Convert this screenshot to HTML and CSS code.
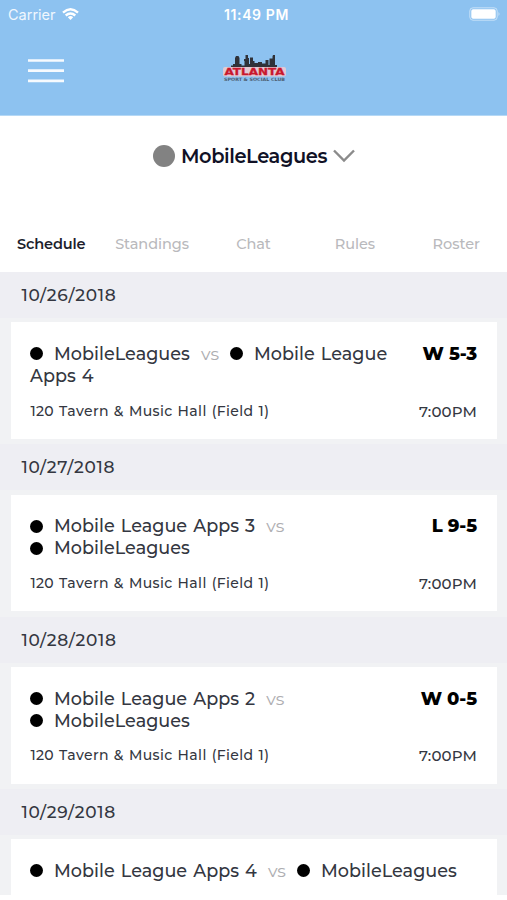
FILE: index.html
```html
<!DOCTYPE html>
<html lang="en">
<head>
<meta charset="utf-8">
<title>MobileLeagues</title>
<link rel="stylesheet" href="styles.css">
</head>
<body>
<div class="screen">
  <header class="top">
    <div class="status">
      <div class="carrier"><span>Carrier</span>
        <svg width="17" height="13" viewBox="0 0 17 13" fill="none" stroke="#fff" stroke-width="2.4"><path d="M1 4.6Q8.5-2 16 4.6M3.7 7.5Q8.5 3.4 13.3 7.5"/><path d="M5.8 9.2Q8.5 7 11.2 9.2L8.5 12z" fill="#fff" stroke="none"/></svg>
      </div>
      <span class="clock">11:49 PM</span>
      <svg class="battery" width="32" height="14" viewBox="0 0 32 14"><rect x=".8" y=".8" width="27.4" height="12.4" rx="3.2" fill="none" stroke="#fff" stroke-opacity=".5"/><rect x="2.3" y="2.3" width="24.4" height="9.4" rx="1.8" fill="#fff"/><path d="M29.5 5q2 2 0 4z" fill="#fff" fill-opacity=".55"/></svg>
    </div>
    <div class="nav">
      <svg class="menu" width="36" height="26" viewBox="0 0 36 26" stroke="#fff" stroke-opacity=".92" stroke-width="2.7"><path d="M0 2.5h36M0 12.7h36M0 22.8h36"/></svg>
      <svg class="logo" width="66" height="30" viewBox="0 0 66 30">
        <path d="M9 15V12.500h2V11h2V5l1-2h2.500L17.500 5v6h2V12.500h3V8H22V6h1.500V2h2.500v3H27v6h1V4.500h3V8h1.500v2h3.500V9h4v1.500h3.500V7h3v5h1V5.500h3V3.500L51 2h2v10H55v3z" fill="#303239"/>
        <rect x="1" y="14" width="63" height="9.500" rx="2" fill="#e2c9d4"/>
        <text class="logo-name" x="2.500" y="22.300" textLength="60" lengthAdjust="spacingAndGlyphs">ATLANTA</text>
        <text class="logo-sub" x="2" y="28" textLength="61" lengthAdjust="spacingAndGlyphs">SPORT &amp; SOCIAL CLUB</text>
      </svg>
    </div>
  </header>
  <div class="team-picker">
    <i class="avatar"></i><span class="team-name">MobileLeagues</span>
    <svg width="22" height="14" viewBox="0 0 22 14" fill="none" stroke="#8b8b8b" stroke-width="2.4"><path d="M1 1.5L11 11.5L21 1.5"/></svg>
  </div>
  <nav class="tabs"><span class="active">Schedule</span><span>Standings</span><span>Chat</span><span>Rules</span><span>Roster</span></nav>
  <main class="list">
    <section class="day">
      <h2>10/26/2018</h2>
      <article class="card">
        <div class="row"><p class="match"><i class="dot"></i><span>MobileLeagues</span><span class="vs">vs</span><i class="dot"></i><span>Mobile League Apps 4</span></p><b class="score">W 5-3</b></div>
        <div class="row meta"><span class="place">120 Tavern &amp; Music Hall (Field 1)</span><span class="time">7:00PM</span></div>
      </article>
    </section>
    <section class="day">
      <h2>10/27/2018</h2>
      <article class="card">
        <div class="row"><p class="match"><i class="dot"></i><span>Mobile League Apps 3</span><span class="vs">vs</span><br><i class="dot"></i><span>MobileLeagues</span></p><b class="score">L 9-5</b></div>
        <div class="row meta"><span class="place">120 Tavern &amp; Music Hall (Field 1)</span><span class="time">7:00PM</span></div>
      </article>
    </section>
    <section class="day">
      <h2>10/28/2018</h2>
      <article class="card">
        <div class="row"><p class="match"><i class="dot"></i><span>Mobile League Apps 2</span><span class="vs">vs</span><br><i class="dot"></i><span>MobileLeagues</span></p><b class="score">W 0-5</b></div>
        <div class="row meta"><span class="place">120 Tavern &amp; Music Hall (Field 1)</span><span class="time">7:00PM</span></div>
      </article>
    </section>
    <section class="day">
      <h2>10/29/2018</h2>
      <article class="card">
        <div class="row"><p class="match wide"><i class="dot"></i><span>Mobile League Apps 4</span><span class="vs">vs</span><i class="dot"></i><span>MobileLeagues</span></p></div>
      </article>
    </section>
  </main>
</div>
</body>
</html>
```
FILE: styles.css
```css
* { box-sizing: border-box; }
body { margin: 0; background: #fff; font-family: Montserrat, Inter, sans-serif; color: #343741; }
.screen { width: 507px; height: 900px; overflow: hidden; display: flex; flex-direction: column; }
.top { height: 116px; flex: none; background: #8dc2f0; border-bottom: 1px solid #b5d8f5; color: #fff; }
.status { height: 28px; padding: 0 6px 0 8px; display: grid; grid-template-columns: 1fr auto 1fr; align-items: center; font-family: Inter, sans-serif; font-size: 14.5px; }
.carrier { display: flex; align-items: center; gap: 6px; color: #f0f7fe; }
.clock { font-size: 14px; font-weight: 600; letter-spacing: .6px; padding-left: 4px; }
.battery { justify-self: end; }
.nav { height: 87px; display: grid; grid-template-columns: 1fr auto 1fr; padding: 0 28px; align-items: start; }
.menu { margin-top: 30px; }
.logo { margin: 25px 0 0 2px; }
.logo-name { font: 700 9.5px "DejaVu Sans", sans-serif; fill: #c9182d; stroke: #c9182d; stroke-width: .3px; }
.logo-sub { font: 700 4.5px "DejaVu Sans", sans-serif; fill: #4c5c70; }
.team-picker { height: 80px; flex: none; display: flex; justify-content: center; align-items: center; color: #101126; padding-left: 1px; }
.avatar { width: 22px; height: 22px; border-radius: 50%; background: #828282; margin-right: 6px; }
.team-name { font-size: 19.4px; font-weight: 600; letter-spacing: -.4px; margin-right: 6px; }
.tabs { height: 76px; flex: none; display: grid; grid-template-columns: repeat(5, 101.4px); align-items: center; text-align: center; padding-top: 20px; font-size: 14.5px; font-weight: 500; color: #b9b9bc; letter-spacing: -.05px; }
.active { color: #1c1e2c; font-weight: 600; letter-spacing: -.15px; padding-left: 1px; }
.list { height: 623px; overflow: hidden; background: #f1f2f4; }
.day { height: 172.3px; }
h2 { margin: 0; height: 46px; padding-left: 21.4px; background: #eeeef3; font-size: 17px; line-height: 46px; font-weight: 500; letter-spacing: .7px; }
.card { margin: 4.4px 10px 0 11px; height: 116.6px; padding: 20.6px 20px 0 19px; background: #fff; }
.row { display: flex; justify-content: space-between; align-items: flex-start; }
.match { margin: 0; width: 370px; font-size: 17.6px; line-height: 22px; font-weight: 500; letter-spacing: .03px; word-spacing: 1.3px; }
.match.wide { width: 440px; }
.dot { display: inline-block; width: 13px; height: 13px; border-radius: 50%; background: #000; margin-right: 11px; vertical-align: -.5px; }
.vs { color: #aeaeb1; font-weight: 400; margin: 0 11px; }
.score { font-size: 18px; line-height: 22px; font-weight: 800; color: #000; white-space: nowrap; letter-spacing: -.1px; }
.meta { margin-top: 13.6px; font-size: 14px; line-height: 20px; font-weight: 500; }
.place { letter-spacing: .38px; word-spacing: .9px; padding-left: .4px; }
.time { font-size: 15px; padding-top: 1px; letter-spacing: .15px; }
```
